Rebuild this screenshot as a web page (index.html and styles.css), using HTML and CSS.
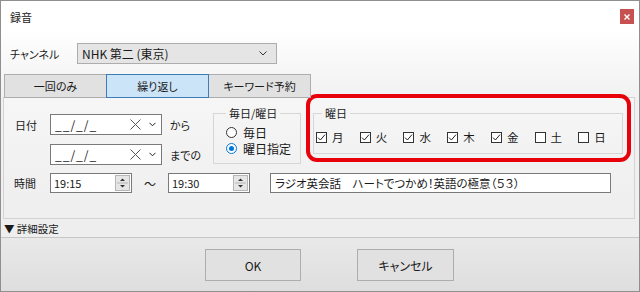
FILE: index.html
```html
<!DOCTYPE html>
<html lang="ja">
<head>
    <meta charset="UTF-8">
    <title>録音</title>
    <link rel="stylesheet" href="styles.css">
</head>
<body>
    <div class="window">
        <div class="titlebar">
            <span class="title">録音</span>
            <span class="close">
                <svg width="6" height="6" viewBox="0 0 6 6"><path d="M0.5 0.5L5.5 5.5M5.5 0.5L0.5 5.5" stroke="#fff" stroke-width="1.4"/></svg>
            </span>
        </div>

        <div class="main">
            <div class="channel-row">
                <span class="channel-label">チャンネル</span>
                <div class="select">
                    <span>NHK 第二 (東京)</span>
                    <svg width="8" height="5" viewBox="0 0 8 5"><path d="M0.5 0.5L4 4L7.5 0.5" fill="none" stroke="#333" stroke-width="1"/></svg>
                </div>
            </div>

            <div class="tabs">
                <div class="tab">一回のみ</div>
                <div class="tab active">繰り返し</div>
                <div class="tab">キーワード予約</div>
            </div>
        </div>

        <div class="panel">
            <div class="panel-top">
                <div class="dates">
                    <div class="field-row">
                        <span class="row-label">日付</span>
                        <div class="date-input">
                            <span class="mask">__/_/_</span>
                            <svg class="clear" width="11" height="11" viewBox="0 0 11 11"><path d="M0.5 0.5L10.5 10.5M10.5 0.5L0.5 10.5" stroke="#555" stroke-width="1"/></svg>
                            <svg class="drop" width="7" height="5" viewBox="0 0 7 5"><path d="M0.5 0.8L3.5 3.8L6.5 0.8" fill="none" stroke="#222" stroke-width="1"/></svg>
                        </div>
                        <span class="suffix">から</span>
                    </div>
                    <div class="field-row">
                        <span class="row-label"></span>
                        <div class="date-input">
                            <span class="mask">__/_/_</span>
                            <svg class="clear" width="11" height="11" viewBox="0 0 11 11"><path d="M0.5 0.5L10.5 10.5M10.5 0.5L0.5 10.5" stroke="#555" stroke-width="1"/></svg>
                            <svg class="drop" width="7" height="5" viewBox="0 0 7 5"><path d="M0.5 0.8L3.5 3.8L6.5 0.8" fill="none" stroke="#222" stroke-width="1"/></svg>
                        </div>
                        <span class="suffix">までの</span>
                    </div>
                </div>

                <fieldset class="group mode">
                    <legend>毎日/曜日</legend>
                    <label class="radio"><span class="radio-dot"></span>毎日</label>
                    <label class="radio"><span class="radio-dot on"></span>曜日指定</label>
                </fieldset>

                <fieldset class="group days">
                    <legend>曜日</legend>
                    <div class="check-row">
                        <label class="check"><span class="box on"></span>月</label>
                        <label class="check"><span class="box on"></span>火</label>
                        <label class="check"><span class="box on"></span>水</label>
                        <label class="check"><span class="box on"></span>木</label>
                        <label class="check"><span class="box on"></span>金</label>
                        <label class="check"><span class="box"></span>土</label>
                        <label class="check"><span class="box"></span>日</label>
                    </div>
                </fieldset>
            </div>

            <div class="field-row time-row">
                <span class="row-label time-label">時間</span>
                <div class="time-input">
                    <span>19:15</span>
                    <span class="spin"></span>
                </div>
                <span class="tilde">〜</span>
                <div class="time-input">
                    <span>19:30</span>
                    <span class="spin"></span>
                </div>
                <div class="text-field">ラジオ英会話　ハートでつかめ！英語の極意（５３）</div>
            </div>

            <div class="highlight"></div>
        </div>

        <div class="details">▼ 詳細設定</div>

        <div class="footer">
            <button class="btn ok">OK</button>
            <button class="btn cancel">キャンセル</button>
        </div>
    </div>
</body>
</html>
```

FILE: styles.css
```css
* {
    box-sizing: border-box;
}

body {
    margin: 0;
    font-family: "Noto Sans CJK JP", "Noto Sans", sans-serif;
    font-size: 11px;
    color: #1a1a1a;
    font-feature-settings: "palt";
    background: #fff;
}

.window {
    width: 640px;
    height: 292px;
    border: 1px solid #8f8f8f;
    display: flex;
    flex-direction: column;
    background: #f0f0f0;
}

/* title bar */
.titlebar {
    height: 32px;
    display: flex;
    justify-content: space-between;
    align-items: flex-start;
    padding: 0 5px 0 9px;
    background: #fff;
}
.title {
    line-height: 32px;
}
.close {
    margin-top: 8px;
    width: 14px;
    height: 15px;
    background: #c75050;
    display: flex;
    align-items: center;
    justify-content: center;
}

.main {
    padding-top: 10px;
    background: linear-gradient(#fefefe, #f1f1f1);
}

.channel-row {
    display: flex;
    align-items: center;
    padding-left: 9px;
    height: 21px;
}
.channel-label {
    width: 67px;
}
.select {
    width: 200px;
    height: 21px;
    border: 1px solid #adadad;
    background: #e5e5e5;
    display: flex;
    align-items: center;
    justify-content: space-between;
    padding: 0 9px 0 4px;
    font-size: 12px;
}

/* tabs */
.tabs {
    display: flex;
    padding-left: 3px;
    margin-top: 10px;
    position: relative;
    z-index: 1;
}
.tab {
    width: 103px;
    height: 24px;
    margin-left: -1px;
    border: 1px solid #adadad;
    background: #e1e1e1;
    display: flex;
    align-items: center;
    justify-content: center;
}
.tab:first-child {
    margin-left: 0;
}
.tab.active {
    background: #cce4f7;
    border-color: #3f7bb6;
    position: relative;
}

/* tab page */
.panel {
    position: relative;
    margin: -1px 4px 0 2px;
    height: 122px;
    border: 1px solid #d3d3d3;
    background: linear-gradient(#f6f6f6, #eeeeee);
}
.panel-top {
    display: flex;
    align-items: flex-start;
    height: 67px;
}
.dates {
    margin-top: 16px;
    display: flex;
    flex-direction: column;
    gap: 9px;
}
.field-row {
    display: flex;
    align-items: center;
}
.row-label {
    width: 46px;
    padding-left: 11px;
}
.time-label {
    padding-left: 10px;
}
.date-input {
    width: 112px;
    height: 21px;
    border: 1px solid #7a7a7a;
    background: #fff;
    display: flex;
    align-items: center;
    padding-left: 4px;
}
.mask {
    font-size: 12px;
    letter-spacing: 1px;
}
.clear {
    margin-left: auto;
}
.drop {
    margin: 0 5px 0 8px;
}
.suffix {
    width: 43px;
    padding-left: 8px;
}

/* group boxes */
.group {
    margin: 8px 0 0;
    border: 1px solid #d6d6d6;
    padding: 4px 0 0 12px;
    min-width: 0;
}
.group legend {
    padding: 0 3px;
    line-height: 14px;
}
.mode {
    width: 88px;
    height: 58px;
    margin-left: 8px;
}
.radio {
    display: flex;
    align-items: center;
    height: 16px;
    gap: 6px;
    font-size: 12px;
}
.radio-dot {
    width: 11px;
    height: 11px;
    border: 1px solid #333;
    border-radius: 50%;
    background: #fff;
    display: flex;
    align-items: center;
    justify-content: center;
}
.radio-dot.on {
    border-color: #0078d7;
}
.radio-dot.on::after {
    content: "";
    width: 5px;
    height: 5px;
    border-radius: 50%;
    background: #0078d7;
}

.days {
    width: 310px;
    height: 48px;
    margin-left: 12px;
    padding: 9px 0 0 2px;
}
.days legend {
    margin-left: 6px;
}
.check-row {
    display: flex;
}
.check {
    width: 44.3px;
    height: 16px;
    display: flex;
    align-items: center;
    gap: 5px;
    font-size: 11.5px;
}
.box {
    width: 11px;
    height: 11px;
    border: 1px solid #333;
    background: #fff;
}
.box.on {
    background: #fff url("data:image/svg+xml,%3Csvg xmlns='http://www.w3.org/2000/svg' width='9' height='9' viewBox='0 0 9 9'%3E%3Cpath d='M1 4.6L3.4 7L8 1.6' fill='none' stroke='%23222' stroke-width='1'/%3E%3C/svg%3E") center no-repeat;
}

/* time row */
.time-row {
    margin-top: 8px;
}
.time-input {
    width: 82px;
    height: 20px;
    border: 1px solid #7a7a7a;
    background: #fff;
    display: flex;
    align-items: center;
    padding: 0 1px 0 3px;
}
.spin {
    margin-left: auto;
    width: 15px;
    height: 16px;
    border: 1px solid #b5b5b5;
    background: #e6e6e6 url("data:image/svg+xml,%3Csvg xmlns='http://www.w3.org/2000/svg' width='13' height='14' viewBox='0 0 13 14'%3E%3Cpath d='M4 5H9L6.5 2.5Z' fill='%23333'/%3E%3Cpath d='M1 7H12' stroke='%23b5b5b5'/%3E%3Cpath d='M4 9H9L6.5 11.5Z' fill='%23333'/%3E%3C/svg%3E") center no-repeat;
}
.tilde {
    width: 36px;
    text-align: center;
    font-size: 12px;
}
.text-field {
    width: 341px;
    height: 20px;
    margin-left: 20px;
    border: 1px solid #7a7a7a;
    background: #fff;
    padding-left: 4px;
    line-height: 18px;
    font-size: 11.5px;
}

/* red annotation */
.highlight {
    position: absolute;
    left: 302px;
    top: -4px;
    width: 325px;
    height: 68px;
    border: 4px solid #e8000b;
    border-radius: 11px;
}

.details {
    height: 19px;
    border-bottom: 1px solid #c6c6c6;
    background: #eeeeee;
    padding-left: 3px;
    display: flex;
    align-items: center;
    font-size: 10.5px;
}

.footer {
    flex: 1;
    display: flex;
    align-items: flex-start;
    gap: 56px;
    padding: 11px 0 0 204px;
    background: linear-gradient(#e9e9e9, #dedede);
}
.btn {
    width: 96px;
    height: 32px;
    border: 1px solid #adadad;
    background: #e1e1e1;
    font-family: inherit;
    font-size: 12px;
    font-feature-settings: "palt";
    color: #1a1a1a;
    padding: 0;
}
.btn.cancel {
    width: 97px;
}
```
